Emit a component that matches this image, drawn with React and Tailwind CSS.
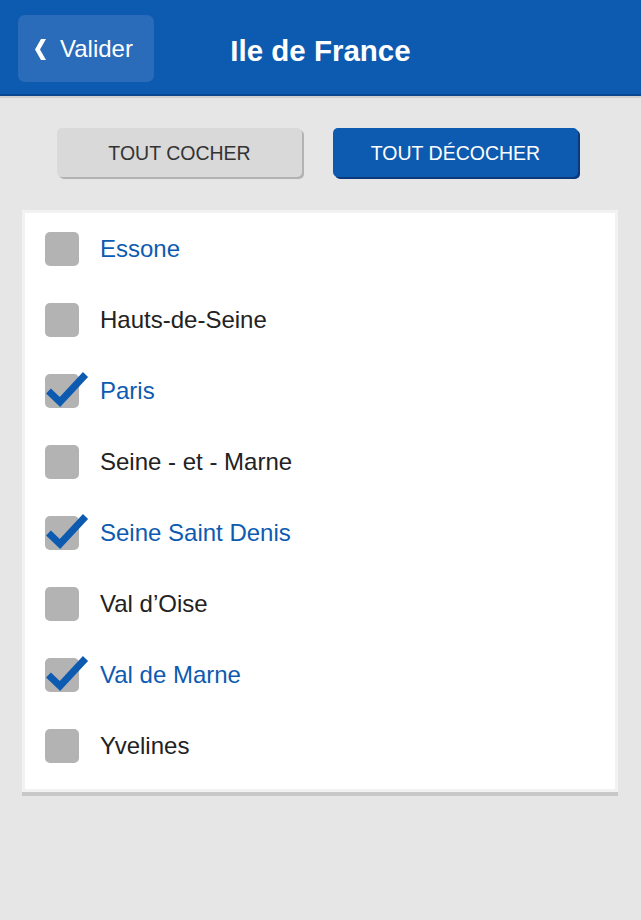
import React from "react";

const items = [
  { label: "Essone", checked: false, blue: true },
  { label: "Hauts-de-Seine", checked: false, blue: false },
  { label: "Paris", checked: true, blue: true },
  { label: "Seine - et - Marne", checked: false, blue: false },
  { label: "Seine Saint Denis", checked: true, blue: true },
  { label: "Val d\u2019Oise", checked: false, blue: false },
  { label: "Val de Marne", checked: true, blue: true },
  { label: "Yvelines", checked: false, blue: false },
];

function Check() {
  return (
    <svg
      className="absolute left-0 top-0 overflow-visible"
      width="44"
      height="36"
      viewBox="0 0 44 36"
    >
      <polyline
        points="3.5,17 15,28 40.5,0.5"
        fill="none"
        stroke="#0d5bb1"
        strokeWidth="7"
        strokeLinecap="butt"
        strokeLinejoin="miter"
      />
    </svg>
  );
}

export default function App() {
  return (
    <div
      className="min-h-[920px] bg-[#e6e6e6]"
      style={{ fontFamily: '"Liberation Sans", Arial, sans-serif' }}
    >
      <header className="flex h-[96px] items-start border-b-2 border-[#0a478e] bg-[#0d5bb1]">
        <button className="ml-[18px] mt-[15px] flex h-[67px] w-[136px] items-center rounded-[7px] bg-[#2a6cba] pl-[17px] text-white">
          <svg width="11" height="21" viewBox="0 0 11 21" className="mr-[14px] mt-[2px]">
            <polygon points="11,0 6,0 0,10.5 6,21 11,21 5,10.5" fill="#ffffff" />
          </svg>
          <span className="text-[24px] leading-none">Valider</span>
        </button>
        <h1 className="flex h-[94px] flex-1 items-center justify-center pt-[7px] text-[29.5px] font-bold leading-none text-white">
          Ile de France
        </h1>
        <div className="w-[154px]" />
      </header>
      <div className="h-[2px] bg-[#d0d0d0]" />

      <div className="mt-[30px] flex justify-center gap-[31px] pr-[6px]">
        <button className="h-[49px] w-[245px] rounded-[5px] bg-[#d9d9d9] pt-[2px] text-[19.5px] text-[#333333] shadow-[2px_2px_0_#b3b3b3]">
          TOUT COCHER
        </button>
        <button className="h-[49px] w-[245px] rounded-[5px] bg-[#0d5bb1] pt-[2px] text-[19.5px] text-white shadow-[2px_2px_0_#0a3a7c]">
          TOUT DÉCOCHER
        </button>
      </div>

      <div className="ml-[22px] mt-[33px] w-[596px] border-[3px] border-[#f2f2f2] bg-white pb-[8px] shadow-[0_4px_0_#c8c8c8]">
        {items.map((it) => (
          <div key={it.label} className="flex h-[71px] items-center pl-[20px]">
            <div className="relative h-[34px] w-[34px] shrink-0 rounded-[5px] bg-[#b3b3b3]">
              {it.checked && <Check />}
            </div>
            <span
              className={
                "ml-[21px] text-[24px] leading-none " +
                (it.blue ? "text-[#0d5bb1]" : "text-[#222222]")
              }
            >
              {it.label}
            </span>
          </div>
        ))}
      </div>
    </div>
  );
}
